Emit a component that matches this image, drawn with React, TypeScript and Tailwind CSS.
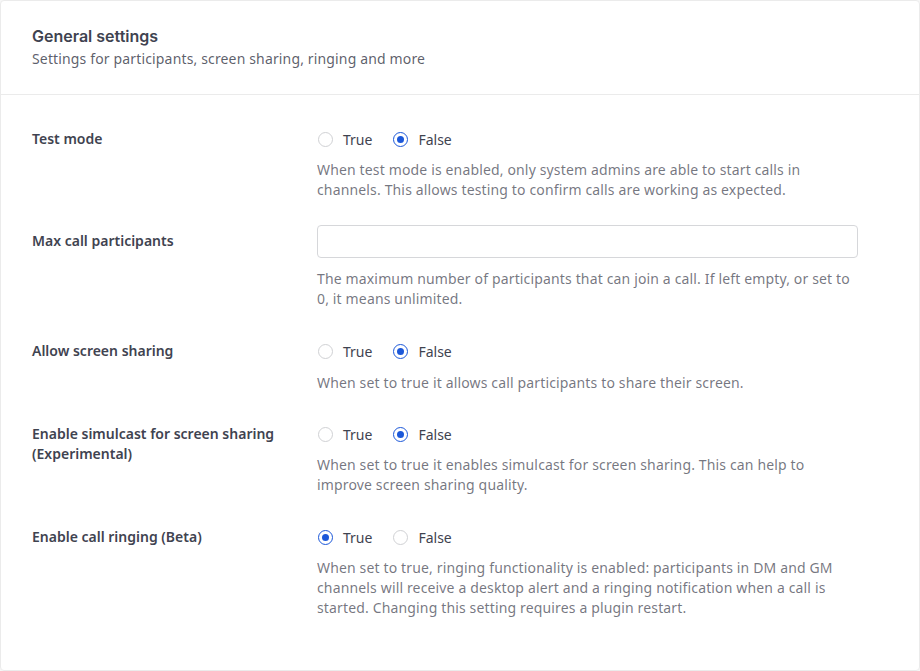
import React from "react";

const font = { fontFamily: '"Noto Sans", "Open Sans", sans-serif' };

function Radio({ checked, label }: { checked: boolean; label: string }) {
  return (
    <label className="flex items-center gap-[10px] h-[20px]">
      {checked ? (
        <span className="w-[15px] h-[15px] rounded-full border-[1.5px] border-[#1c58d9] flex items-center justify-center">
          <span className="w-[7px] h-[7px] rounded-full bg-[#1c58d9]" />
        </span>
      ) : (
        <span className="w-[15px] h-[15px] rounded-full border border-[#d0d1d4] bg-white" />
      )}
      <span className="text-[14px] text-[#3f4350]">{label}</span>
    </label>
  );
}

function RadioPair({ value }: { value: boolean }) {
  return (
    <div className="flex items-center gap-[21px] pl-[1px]">
      <Radio checked={value} label="True" />
      <Radio checked={!value} label="False" />
    </div>
  );
}

function Help({ children, mt }: { children: React.ReactNode; mt: string }) {
  return (
    <p className={`${mt} text-[14px] leading-[20px] tracking-[0.15px] text-[#3f4350]/[0.72]`}>{children}</p>
  );
}

function Row({
  label,
  labelPad = "",
  mb,
  children,
}: {
  label: React.ReactNode;
  labelPad?: string;
  mb: string;
  children: React.ReactNode;
}) {
  return (
    <div className={`flex ${mb}`}>
      <div className={`w-[285px] shrink-0 pr-4 text-[14px] leading-[19.5px] font-semibold text-[#3f4350] ${labelPad}`}>
        {label}
      </div>
      <div className="w-[541px]">{children}</div>
    </div>
  );
}

export default function App() {
  return (
    <div className="min-h-[671px] bg-[#f7f7f7]" style={font}>
      <div className="bg-white rounded-[4px] border border-[#ebebeb] min-h-[671px]">
        <div className="px-[31px] pt-[23px] pb-[24px] border-b border-[#ebebeb]">
          <h1 className="text-[16px] leading-[24px] font-semibold text-[#3f4350]" style={{ fontFamily: '"Inter", "Open Sans", sans-serif' }}>
            General settings
          </h1>
          <p className="text-[14px] leading-[22px] tracking-[0.15px] text-[#3f4350]/[0.85]">
            Settings for participants, screen sharing, ringing and more
          </p>
        </div>
        <div className="px-[31px] pt-[34px]">
          <Row label="Test mode" mb="mb-[25px]">
            <RadioPair value={false} />
            <Help mt="mt-[11px]">
              When test mode is enabled, only system admins are able to start calls in channels. This allows testing to confirm calls are working as expected.
            </Help>
          </Row>
          <Row label="Max call participants" labelPad="pt-[6px]" mb="mb-[32px]">
            <input className="w-full h-[33px] rounded-[4px] border border-[#d6d7da] bg-white outline-none" />
            <Help mt="mt-[11px]">
              The maximum number of participants that can join a call. If left empty, or set to 0, it means unlimited.
            </Help>
          </Row>
          <Row label="Allow screen sharing" mb="mb-[31px]">
            <RadioPair value={false} />
            <Help mt="mt-[12px]">When set to true it allows call participants to share their screen.</Help>
          </Row>
          <Row label="Enable simulcast for screen sharing (Experimental)" mb="mb-[32px]">
            <RadioPair value={false} />
            <Help mt="mt-[11px]">
              When set to true it enables simulcast for screen sharing. This can help to improve screen sharing quality.
            </Help>
          </Row>
          <Row label="Enable call ringing (Beta)" mb="mb-[32px]">
            <RadioPair value={true} />
            <Help mt="mt-[11px]">
              When set to true, ringing functionality is enabled: participants in DM and GM channels will receive a desktop alert and a ringing notification when a call is started. Changing this setting requires a plugin restart.
            </Help>
          </Row>
        </div>
      </div>
    </div>
  );
}
